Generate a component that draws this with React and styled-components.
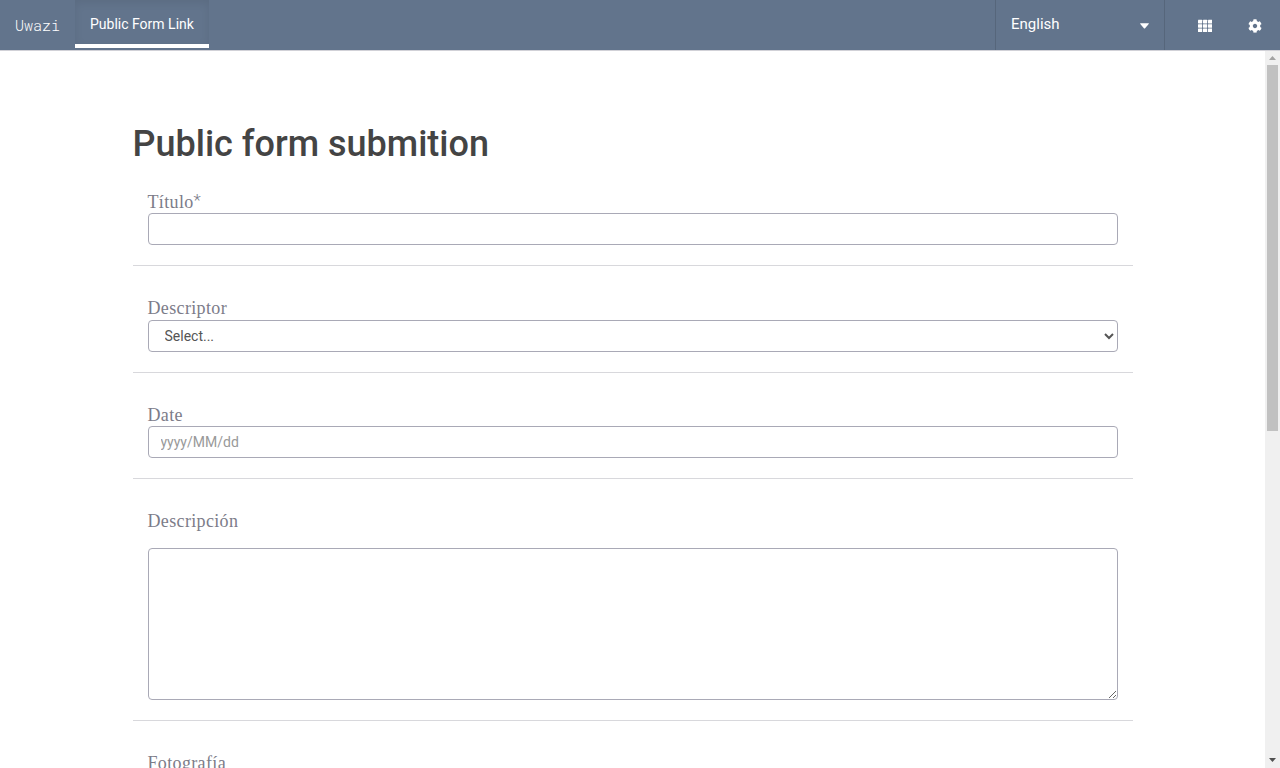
import React from 'react';
import styled, { createGlobalStyle } from 'styled-components';

const GlobalStyle = createGlobalStyle`
  *, *::before, *::after { box-sizing: border-box; }
  html, body { margin: 0; height: 100%; overflow: hidden; background: #fff; }
  body { font-family: Roboto, "Liberation Sans", sans-serif; font-size: 14px; color: #444; }
`;

const Page = styled.div`
  display: flex;
  flex-direction: column;
  height: 768px;
  overflow: hidden;
`;

const Header = styled.header`
  display: flex;
  flex: none;
  height: 51px;
  background: #62748c;
  border-bottom: 1px solid #d1d1d7;
  color: #fff;
`;

const Brand = styled.a`
  width: 75px;
  padding-left: 15px;
  font: 300 15px/50px "Roboto Mono", "Liberation Mono", monospace;
  color: #fff;
`;

const NavLink = styled.a`
  height: 48px;
  width: 134px;
  padding-left: 15px;
  font-size: 14px;
  line-height: 49px;
  white-space: nowrap;
  border-bottom: 4px solid #fff;
  box-shadow: inset 0 3px 9px rgba(0, 0, 0, 0.075);
`;

const Language = styled.div`
  display: flex;
  justify-content: space-between;
  width: 170px;
  height: 50px;
  margin-left: auto;
  padding: 0 15px;
  border: solid #56667b;
  border-width: 0 1px;
  font-size: 15px;
  line-height: 48px;
`;

const Caret = styled.svg`
  width: 9px;
  height: 6px;
  margin-top: 23px;
  fill: #fff;
`;

const Actions = styled.div`
  display: flex;
  align-items: center;
  gap: 36px;
  width: 115px;
  height: 50px;
  padding: 2px 0 0 33px;
`;

const ActionIcon = styled.svg`
  width: 14px;
  height: 14px;
  fill: #fff;
`;

const Body = styled.div`
  display: flex;
  flex: 1;
  min-height: 0;
`;

const Content = styled.main`
  flex: 1;
  overflow: hidden;
`;

const Form = styled.form`
  width: 1000px;
  margin: 0 auto;
  padding-top: 73px;
`;

const Title = styled.h1`
  height: 39px;
  margin: 0;
  font-size: 36px;
  font-weight: 500;
  line-height: 40px;
  white-space: nowrap;
`;

const Group = styled.div`
  padding: ${p => (p.$first ? 26.5 : 30)}px 15px 20px;
  border-bottom: 1px solid #d8d8dc;
`;

const Label = styled.label`
  display: block;
  height: ${p => (p.$tall ? 39 : 23.5)}px;
  font: 18px/24px "Roboto Slab", "Liberation Serif", serif;
  letter-spacing: 0.35px;
  color: #7c7c89;
  white-space: nowrap;
`;

const Required = styled.span`
  font: 300 17px/1 Roboto, sans-serif;
  letter-spacing: 0;
  vertical-align: 2px;
`;

const fieldStyle = `
  display: block;
  width: 970px;
  height: 32px;
  margin: 0;
  padding: 0 12px;
  border: 1px solid #a9a9b6;
  border-radius: 4px;
  background: #fff;
  color: #555;
  font: 14px Roboto, sans-serif;
  outline: none;
`;

const Input = styled.input`
  ${fieldStyle}
  &::placeholder { color: #999; opacity: 1; }
`;

const Select = styled.select`
  ${fieldStyle}
`;

const TextArea = styled.textarea`
  ${fieldStyle}
  height: 152px;
  resize: vertical;
`;

const Scrollbar = styled.div`
  display: flex;
  flex-direction: column;
  align-items: center;
  width: 15px;
  background: #f0f0f0;
`;

const ScrollArrow = styled.svg`
  flex: none;
  width: 15px;
  height: 14px;
  margin-top: ${p => (p.$end ? 'auto' : 0)};
  fill: ${p => (p.$end ? '#505050' : '#a3a3a3')};
`;

const Thumb = styled.div`
  width: 11px;
  height: 366px;
  background: #c1c1c1;
`;

export default function App() {
  return (
    <Page>
      <GlobalStyle />
      <Header>
        <Brand>Uwazi</Brand>
        <NavLink>Public Form Link</NavLink>
        <Language>
          English
          <Caret viewBox="0 0 9 6"><path d="M.6 .2h7.8q.9 0 .3.8L5.1 5.2q-.6.6-1.2 0L.3 1Q-.3.2.6.2z" /></Caret>
        </Language>
        <Actions>
          <ActionIcon viewBox="0 0 14 14">
            {[0.85, 5.15, 9.5].map(y => [0, 5, 10].map(x => (
              <rect key={`${x}-${y}`} x={x} y={y} width="4.2" height="3.6" rx=".4" />
            )))}
          </ActionIcon>
          <ActionIcon viewBox="0 0 512 512">
            <path d="M487.4 315.7l-42.6-24.6c4.3-23.2 4.3-47 0-70.2l42.6-24.6c4.9-2.8 7.1-8.6 5.5-14-11.1-35.6-30-67.8-54.7-94.6-3.8-4.1-10-5.1-14.8-2.3L380.8 110c-17.9-15.4-38.5-27.3-60.8-35.1V25.8c0-5.6-3.9-10.5-9.4-11.7-36.7-8.2-74.3-7.8-109.2 0-5.5 1.2-9.4 6.1-9.4 11.7V75c-22.2 7.9-42.8 19.8-60.8 35.1L88.7 85.5c-4.9-2.8-11-1.9-14.8 2.3-24.7 26.7-43.6 58.9-54.7 94.6-1.7 5.4.6 11.2 5.5 14L67.3 221c-4.3 23.2-4.3 47 0 70.2l-42.6 24.6c-4.9 2.8-7.1 8.6-5.5 14 11.1 35.6 30 67.8 54.7 94.6 3.8 4.1 10 5.1 14.8 2.3l42.6-24.6c17.9 15.4 38.5 27.3 60.8 35.1v49.2c0 5.6 3.9 10.5 9.4 11.7 36.7 8.2 74.3 7.8 109.2 0 5.5-1.2 9.4-6.1 9.4-11.7v-49.2c22.2-7.9 42.8-19.8 60.8-35.1l42.6 24.6c4.9 2.8 11 1.9 14.8-2.3 24.7-26.7 43.6-58.9 54.7-94.6 1.5-5.5-.7-11.3-5.6-14.1zM256 336c-44.1 0-80-35.9-80-80s35.9-80 80-80 80 35.9 80 80-35.9 80-80 80z" />
          </ActionIcon>
        </Actions>
      </Header>
      <Body>
        <Content>
          <Form>
            <Title>Public form submition</Title>
            <Group $first>
              <Label>Título<Required>*</Required></Label>
              <Input />
            </Group>
            <Group>
              <Label>Descriptor</Label>
              <Select><option>Select...</option></Select>
            </Group>
            <Group>
              <Label>Date</Label>
              <Input placeholder="yyyy/MM/dd" />
            </Group>
            <Group>
              <Label $tall>Descripción</Label>
              <TextArea />
            </Group>
            <Group>
              <Label>Fotografía</Label>
            </Group>
          </Form>
        </Content>
        <Scrollbar>
          <ScrollArrow viewBox="0 0 15 14"><path d="M4 9h7L7.5 5z" /></ScrollArrow>
          <Thumb />
          <ScrollArrow $end viewBox="0 0 15 14"><path d="M4 4h7L7.5 8z" /></ScrollArrow>
        </Scrollbar>
      </Body>
    </Page>
  );
}
